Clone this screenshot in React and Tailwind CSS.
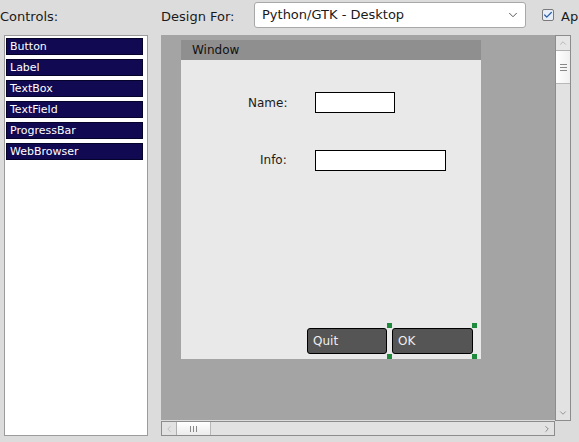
import { ChevronDown, ChevronUp, ChevronLeft, ChevronRight, Check } from "lucide-react";

// palette of widgets offered to the designer
const controls = ["Button", "Label", "TextBox", "TextField", "ProgressBar", "WebBrowser"];

function Handle({ className }) {
  return <div className={"absolute w-[5px] h-[5px] bg-[#1f8a3c] " + className} />;
}

export default function App() {
  return (
    <div className="w-[579px] h-[442px] overflow-hidden bg-[#dcdcdc] text-[#1a1a1a] font-['DejaVu_Sans',sans-serif] flex flex-col">
      {/* top toolbar */}
      <div className="h-[35px] flex items-start whitespace-nowrap">
        <span className="w-[161px] text-[13px] mt-[7px]">Controls:</span>
        <span className="w-[93px] text-[13px] mt-[7px]">Design For:</span>
        <div className="mt-[2px] w-[272px] h-[26px] bg-white border border-[#a8a8a8] rounded-[3px] flex items-center justify-between pl-[7px] pr-[5px] text-[13px]">
          <span>Python/GTK - Desktop</span>
          <ChevronDown size={14} strokeWidth={1.5} className="text-[#444]" />
        </div>
        <div className="ml-[16px] mt-[9px] w-[12px] h-[12px] border border-[#7a7a7a] rounded-[2px] bg-[#e8eef8] flex items-center justify-center">
          <Check size={10} strokeWidth={3} className="text-[#2a5ea8]" />
        </div>
        <span className="ml-[7px] mt-[7px] text-[13px]">Ap</span>
      </div>

      <div className="flex">
        {/* controls list */}
        <div className="ml-[4px] w-[144px] h-[401px] bg-white border border-[#9c9c9c] pt-[2px] flex flex-col gap-[4px]">
          {controls.map((c) => (
            <div
              key={c}
              className="ml-[1px] w-[137px] h-[17px] bg-[#110a52] border border-[#05032a] text-white text-[11px] leading-[15px] pl-[3px]"
            >
              {c}
            </div>
          ))}
        </div>

        {/* design canvas */}
        <div className="ml-[13px] flex flex-col">
          <div className="flex">
            <div className="w-[394px] h-[385px] bg-[#a4a4a4] pl-[20px] pt-[5px]">
              <div className="w-[300px] h-[319px] flex flex-col">
                <div className="h-[20px] bg-[#8f8f8f] pl-[11px] text-[12px] leading-[20px] text-[#111]">Window</div>
                <div className="relative flex-1 bg-[#e9e9e9] text-[12px]">
                  <span className="absolute left-[67px] top-[34px]">Name:</span>
                  <div className="absolute left-[134px] top-[32px] w-[80px] h-[21px] bg-white border border-black" />
                  <span className="absolute left-[79px] top-[91px]">Info:</span>
                  <div className="absolute left-[134px] top-[90px] w-[131px] h-[21px] bg-white border border-black" />

                  <div className="absolute left-[126px] top-[268px] w-[80px] h-[26px] bg-[#555555] border border-black rounded-[3px] text-[#eeeeee] pl-[5px] leading-[24px]">
                    Quit
                  </div>
                  <div className="absolute left-[211px] top-[268px] w-[81px] h-[26px] bg-[#555555] border border-black rounded-[3px] text-[#eeeeee] pl-[5px] leading-[24px]">
                    OK
                  </div>
                  {/* selection handles round OK */}
                  <Handle className="left-[206px] top-[263px]" />
                  <Handle className="left-[291px] top-[263px]" />
                  <Handle className="left-[206px] top-[294px]" />
                  <Handle className="left-[291px] top-[294px]" />
                </div>
              </div>
            </div>
            {/* vertical scrollbar */}
            <div className="w-[16px] h-[386px] bg-[#e2e2e2] border border-[#8c8c8c] flex flex-col">
              <div className="h-[15px] border-b border-[#b0b0b0] flex items-center justify-center bg-[#e6e6e6]">
                <ChevronUp size={10} strokeWidth={1.5} className="text-[#999]" />
              </div>
              <div className="h-[33px] bg-gradient-to-r from-white to-[#f0f0f0] border-b border-[#b8b8b8] flex flex-col items-center justify-center gap-[2px]">
                <div className="w-[7px] h-px bg-[#888]" />
                <div className="w-[7px] h-px bg-[#888]" />
                <div className="w-[7px] h-px bg-[#888]" />
              </div>
              <div className="flex-1" />
              <div className="h-[15px] flex items-center justify-center">
                <ChevronDown size={10} strokeWidth={1.5} className="text-[#666]" />
              </div>
            </div>
          </div>
          {/* horizontal scrollbar */}
          <div className="w-[394px] h-[15px] bg-[#e2e2e2] border border-[#8c8c8c] flex">
            <div className="w-[15px] border-r border-[#b0b0b0] flex items-center justify-center">
              <ChevronLeft size={10} strokeWidth={1.5} className="text-[#aaa]" />
            </div>
            <div className="w-[34px] bg-gradient-to-b from-white to-[#ececec] border-r border-[#b8b8b8] flex items-center justify-center gap-[2px]">
              <div className="w-px h-[6px] bg-[#888]" />
              <div className="w-px h-[6px] bg-[#888]" />
              <div className="w-px h-[6px] bg-[#888]" />
            </div>
            <div className="flex-1" />
            <div className="w-[15px] flex items-center justify-center">
              <ChevronRight size={10} strokeWidth={1.5} className="text-[#555]" />
            </div>
          </div>
        </div>
      </div>
    </div>
  );
}
